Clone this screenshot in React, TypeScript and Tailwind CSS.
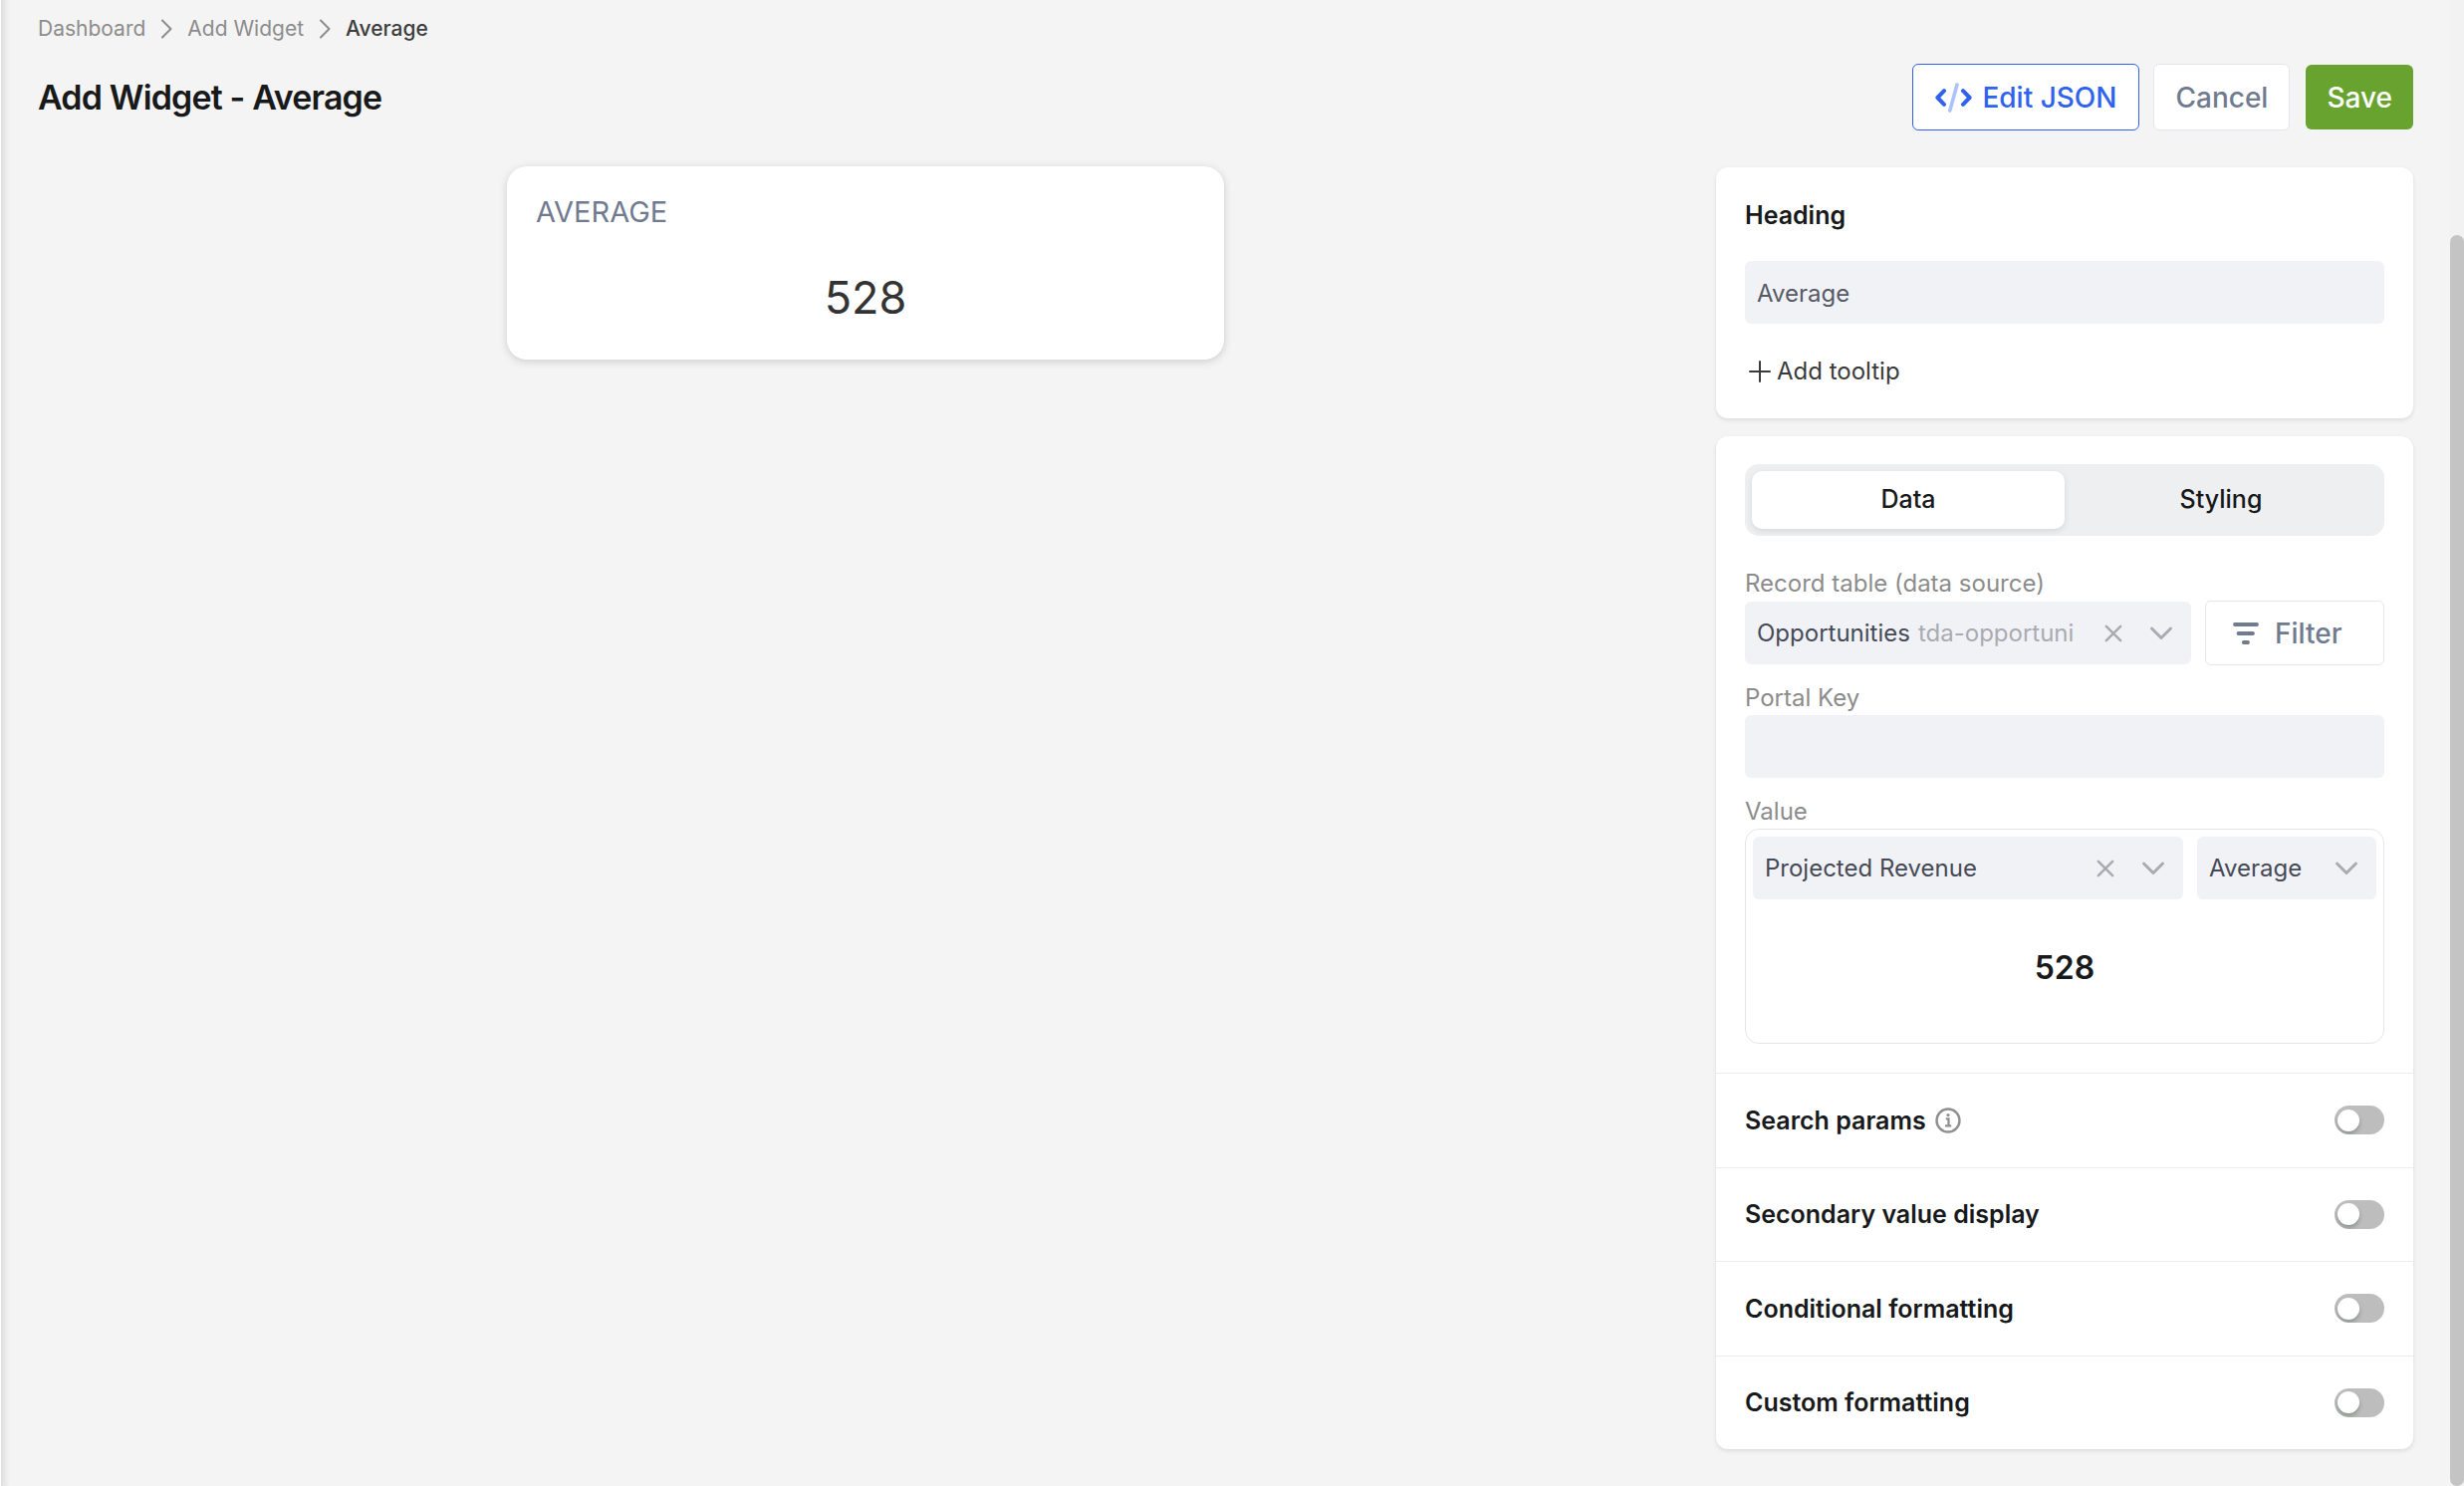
import { useState } from "react";
import type { ReactNode } from "react";

const ChevronRightIcon = () => (
  <svg width="12" height="20" viewBox="0 0 12 20" fill="none" stroke="#8c8c8c" strokeWidth="2" strokeLinecap="round" strokeLinejoin="round">
    <path d="M2 1.5 10.5 10 2 18.5" />
  </svg>
);

const ChevronDownIcon = () => (
  <svg width="24" height="16" viewBox="0 0 24 16" fill="none" stroke="#a9abb3" strokeWidth="3" strokeLinecap="round" strokeLinejoin="round" className="pointer-events-none shrink-0">
    <path d="M2.5 3 12 12.5 21.5 3" />
  </svg>
);

const CloseIcon = () => (
  <svg width="18" height="18" viewBox="0 0 18 18" fill="none" stroke="#a9abb3" strokeWidth="2.5" strokeLinecap="round">
    <path d="M1.8 1.8 16.2 16.2M16.2 1.8 1.8 16.2" />
  </svg>
);

const CodeIcon = () => (
  <svg width="37" height="30" viewBox="0 0 37 30" fill="none" stroke="#2f62ed" strokeLinecap="round" strokeLinejoin="round">
    <path d="M9 8.2 2.4 15 9 21.8" strokeWidth="4" />
    <path d="M28 8.2 34.6 15 28 21.8" strokeWidth="4" />
    <path d="M22 2 14.8 28" strokeWidth="3.6" stroke="#adc1fa" />
  </svg>
);

const FilterIcon = () => (
  <svg width="26" height="22" viewBox="0 0 26 22" fill="none" stroke="#717b90" strokeWidth="3.8" strokeLinecap="round">
    <path d="M2 2h22M5.5 11h14.5M10.8 20h4.2" />
  </svg>
);

const PlusIcon = () => (
  <svg width="22" height="22" viewBox="0 0 22 22" fill="none" stroke="#3a3a3a" strokeWidth="2" strokeLinecap="round">
    <path d="M11 1v20M1 11h20" />
  </svg>
);

const InfoIcon = () => (
  <svg width="26" height="26" viewBox="0 0 26 26" fill="none" stroke="#8f8f8f">
    <circle cx="13" cy="13" r="11.5" strokeWidth="2.4" />
    <path d="M10.8 11.4h2.7v7M10 18.4h6.2" strokeWidth="2.2" />
    <circle cx="13" cy="7.6" r="1.6" fill="#8f8f8f" stroke="none" />
  </svg>
);

interface SelectBoxProps {
  id: string;
  value: string;
  label?: string;
  hint?: string;
  clearable?: boolean;
  className: string;
}

const SelectBox = ({ id, value, label, hint, clearable, className }: SelectBoxProps) => (
  <div className={`flex h-[63px] items-center rounded-md bg-[#f1f2f6] pr-[18px] pl-3 ${className}`}>
    <div className="flex min-w-0 flex-1 items-center gap-2 overflow-hidden pt-px">
      <select
        id={id}
        aria-label={label}
        className={`appearance-none bg-transparent leading-8 text-[#464a57] outline-none ${hint ? "shrink-0 [field-sizing:content]" : "w-full"}`}
      >
        <option>{value}</option>
      </select>
      {hint && <span className="leading-8 whitespace-nowrap text-[#a9abb3]">{hint}</span>}
    </div>
    {clearable && (
      <button aria-label="Clear" className="mr-[27px] ml-5 shrink-0">
        <CloseIcon />
      </button>
    )}
    <ChevronDownIcon />
  </div>
);

interface ToggleRowProps {
  id: string;
  title: string;
  icon?: ReactNode;
}

const ToggleRow = ({ id, title, icon }: ToggleRowProps) => {
  const [enabled, setEnabled] = useState(false);

  return (
    <div className="flex items-center justify-between border-t border-[#ececec] px-[29px]">
      <div className="flex items-center gap-[9px]">
        <label htmlFor={id} className="text-[25px] leading-8 font-semibold text-[#18191b]">
          {title}
        </label>
        {icon}
      </div>
      <input
        id={id}
        type="checkbox"
        role="switch"
        checked={enabled}
        onChange={(e) => setEnabled(e.target.checked)}
        className="flex h-[29px] w-[50px] appearance-none items-center overflow-hidden rounded-full bg-[#bdbdbd] px-[3px] before:size-[22px] before:rounded-full before:bg-white before:shadow-[0_3px_4px_rgba(0,35,11,0.25)] checked:justify-end checked:bg-[#69a32f]"
      />
    </div>
  );
};

export default function App() {
  const [tab, setTab] = useState("data");
  const [heading, setHeading] = useState("Average");
  const [portalKey, setPortalKey] = useState("");

  const tabClass = (name: string) =>
    `flex-1 rounded-[10px] text-[25px] font-medium text-[#18191b] ${tab === name ? "bg-white shadow-[0_2px_6px_rgba(0,0,0,0.1)]" : ""}`;

  return (
    <div className="flex min-h-screen bg-[#f4f4f4] font-[Inter,sans-serif] text-[24px]">
      {/* Sidebar edge */}
      <div className="w-[10px] shrink-0 border-l border-white bg-linear-to-r from-[#e0e0e0] to-[#f4f4f4]" />

      <div className="min-w-0 flex-1 pr-[37px] pb-[37px] pl-[28px]">
        {/* Breadcrumb */}
        <nav aria-label="Breadcrumb" className="flex items-center gap-[15px] pt-[13px] text-[21px] leading-8 text-[#8c8c8c]">
          <a href="#dashboard">Dashboard</a>
          <ChevronRightIcon />
          <a href="#add-widget">Add Widget</a>
          <ChevronRightIcon />
          <span className="font-medium text-[#3d3d3d]">Average</span>
        </nav>

        <header className="mt-[19px] flex items-center justify-between">
          <h1 className="text-[34px] leading-[40px] font-semibold tracking-tight text-[#18191b]">Add Widget - Average</h1>
          <div className="flex items-center text-[28px]">
            <button className="flex h-[67px] items-center gap-[10px] rounded-md border border-[#2f62ed] bg-white px-[22px] font-medium text-[#2f62ed]">
              <CodeIcon />
              Edit JSON
            </button>
            <button className="ml-[14px] h-[67px] rounded-md border border-[#e4e6ec] bg-white px-[21px] font-medium text-[#717b90]">
              Cancel
            </button>
            <button className="ml-4 h-[65px] rounded-md bg-[#69a32f] px-[21px] font-medium text-white">Save</button>
          </div>
        </header>

        <div className="mt-9 flex items-start gap-[23px]">
          {/* Preview */}
          <main className="flex min-w-0 flex-1 justify-center">
            <section className="h-[194px] w-[720px] rounded-[20px] bg-white px-[29px] pt-[26px] shadow-[0_2px_8px_rgba(0,0,0,0.16)]">
              <h2 className="text-[29px] leading-[40px] text-[#717b90]">AVERAGE</h2>
              <p className="mt-[38px] text-center text-[45px] leading-[56px] text-[#333333]">528</p>
            </section>
          </main>

          {/* Settings */}
          <aside className="flex w-[700px] shrink-0 flex-col gap-[18px] pt-px">
            <section className="rounded-xl bg-white px-[29px] pt-8 pb-[31px] shadow-[0_2px_4px_rgba(0,0,0,0.1)]">
              <label htmlFor="heading" className="block text-[25px] leading-8 font-semibold text-[#18191b]">
                Heading
              </label>
              <input
                id="heading"
                value={heading}
                onChange={(e) => setHeading(e.target.value)}
                className="mt-[30px] block h-[63px] w-full rounded-md bg-[#f1f2f6] px-3 pt-px text-[#565a66] outline-none"
              />
              <button className="mt-8 flex items-center gap-[6px] pl-1 leading-8 text-[#3a3a3a]">
                <PlusIcon />
                Add tooltip
              </button>
            </section>

            <section className="rounded-xl bg-white pt-7 shadow-[0_2px_4px_rgba(0,0,0,0.1)]">
              <div className="px-[29px] pb-[29px]">
                <div role="tablist" className="grid h-[72px] grid-cols-2 rounded-[14px] bg-[#eeeff1] p-[7px]">
                  <button role="tab" aria-selected={tab === "data"} onClick={() => setTab("data")} className={tabClass("data")}>
                    Data
                  </button>
                  <button role="tab" aria-selected={tab === "styling"} onClick={() => setTab("styling")} className={tabClass("styling")}>
                    Styling
                  </button>
                </div>

                <label htmlFor="record-table" className="mt-8 block leading-8 text-[#8c8c8c]">
                  Record table (data source)
                </label>
                <div className="mt-[2px] flex h-[63px] items-center gap-[14px]">
                  <SelectBox id="record-table" value="Opportunities" hint="tda-opportuni" clearable className="min-w-0 flex-1" />
                  <button className="flex h-[65px] w-[180px] shrink-0 items-center gap-4 rounded-md border border-[#e4e6ec] bg-white pl-[27px] text-[28px] font-medium text-[#717b90]">
                    <FilterIcon />
                    Filter
                  </button>
                </div>

                <label htmlFor="portal-key" className="mt-[18px] block leading-8 text-[#8c8c8c]">
                  Portal Key
                </label>
                <input
                  id="portal-key"
                  value={portalKey}
                  onChange={(e) => setPortalKey(e.target.value)}
                  className="mt-px block h-[63px] w-full rounded-md bg-[#f1f2f6] px-3 pt-px text-[#565a66] outline-none"
                />

                <label htmlFor="value-field" className="mt-[18px] block leading-8 text-[#8c8c8c]">
                  Value
                </label>
                <div className="mt-px rounded-[14px] border border-[#e4e6ec] p-[7px]">
                  <div className="flex gap-[14px]">
                    <SelectBox id="value-field" value="Projected Revenue" clearable className="min-w-0 flex-1" />
                    <SelectBox id="aggregate" label="Aggregate" value="Average" className="w-[180px] shrink-0" />
                  </div>
                  <p className="flex h-[137px] items-center justify-center text-[32px] font-semibold text-[#18191b]">528</p>
                </div>
              </div>

              <div className="grid h-[378px] grid-rows-4">
                <ToggleRow id="search-params" title="Search params" icon={<InfoIcon />} />
                <ToggleRow id="secondary-value" title="Secondary value display" />
                <ToggleRow id="conditional-formatting" title="Conditional formatting" />
                <ToggleRow id="custom-formatting" title="Custom formatting" />
              </div>
            </section>
          </aside>
        </div>
      </div>

      {/* Scrollbar */}
      <div className="flex w-[14px] shrink-0 flex-col bg-[#f2f2f2] pt-[236px]">
        <div className="flex-1 rounded-full bg-[#c4c4c4]" />
      </div>
    </div>
  );
}
